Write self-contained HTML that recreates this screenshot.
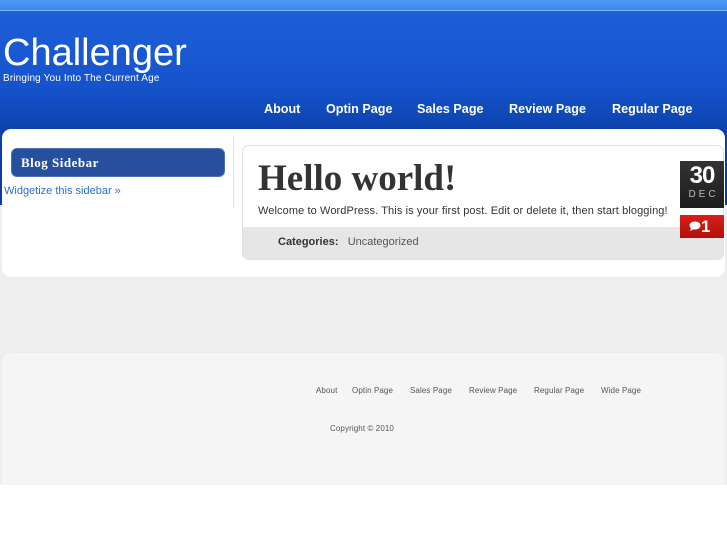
<!DOCTYPE html>
<html><head><style>
*{margin:0;padding:0;box-sizing:border-box}
body{width:727px;height:545px;background:#fff;font-family:"Liberation Sans",sans-serif;position:relative;overflow:hidden}
.top{position:absolute;left:0;top:0;width:727px;height:11px;background:linear-gradient(#4f9af7,#3a86ee);border-bottom:1px solid #7fb4f5}
.hdr{position:absolute;left:0;top:11px;width:727px;height:194px;background:linear-gradient(180deg,#1d5fd8 0%,#1553cb 40%,#0a3fa6 66%,#0a3a9c 100%)}
.gray{position:absolute;left:0;top:205px;width:727px;height:280px;background:#eeeeee}
.title{position:absolute;left:3px;top:32px;color:#fff;font-size:38px}
.tag{position:absolute;left:3px;top:73px;color:#fff;font-size:10px;letter-spacing:.15px}
.nav{position:absolute;top:102px;color:#fff;font-weight:bold;font-size:12.6px}
.main{position:absolute;left:2px;top:129px;width:723px;height:148px;background:#fff;border-radius:9px}
.sbh{position:absolute;left:11px;top:148px;width:214px;height:29px;background:#26509e;border:1px solid #4a70b8;border-radius:6px;color:#fff;font-family:"Liberation Serif",serif;font-weight:bold;font-size:13px;padding:6px 9px;letter-spacing:.5px}
.wid{position:absolute;left:4px;top:185px;color:#2a6fd0;font-size:11px}
.vl{position:absolute;left:233px;top:136px;width:1px;height:72px;background:#e2e2e2}
.post{position:absolute;left:242px;top:145px;width:482px;height:115px;background:#fff;border:1px solid #e0e0e0;border-radius:7px;overflow:hidden}
.pf{position:absolute;left:0;top:81px;width:100%;height:34px;background:#e6e6e6}
.h1{position:absolute;left:258px;top:157px;font-family:"Liberation Serif",serif;font-weight:bold;font-size:37px;color:#333}
.txt{position:absolute;left:258px;top:205px;font-size:11px;color:#333;letter-spacing:.1px}
.cat{position:absolute;left:278px;top:236px;font-size:11px;color:#555}
.date{position:absolute;left:680px;top:161px;width:44px;height:47px;background:linear-gradient(#333,#1d1d1d);color:#fff;text-align:center}
.date b{display:block;font-size:24px;line-height:26px;padding-top:2px;letter-spacing:-1px}
.date span{display:block;font-size:10px;letter-spacing:3px;color:#bbb;padding-left:3px}
.cm{position:absolute;left:680px;top:215px;width:44px;height:23px;background:linear-gradient(#d8201c,#b30f0c);color:#fff;font-weight:bold;font-size:17px;line-height:23px;padding-left:9px}
.foot{position:absolute;left:2px;top:353px;width:723px;height:132px;background:#f5f5f5;border-radius:9px 9px 0 0}
.fl{position:absolute;top:386px;font-size:8px;color:#555;letter-spacing:.1px}
</style></head><body>
<div class="top"></div><div class="hdr"></div><div class="gray"></div>
<div class="title">Challenger</div>
<div class="tag">Bringing You Into The Current Age</div>
<div class="nav" style="left:264px">About</div>
<div class="nav" style="left:326px">Optin Page</div>
<div class="nav" style="left:417px">Sales Page</div>
<div class="nav" style="left:509px">Review Page</div>
<div class="nav" style="left:612px">Regular Page</div>
<div class="main"></div>
<div class="sbh">Blog Sidebar</div>
<div class="wid">Widgetize this sidebar »</div>
<div class="vl"></div>
<div class="post"><div class="pf"></div></div>
<div class="h1">Hello world!</div>
<div class="txt">Welcome to WordPress. This is your first post. Edit or delete it, then start blogging!</div>
<div class="cat"><b style="color:#333">Categories:</b>&nbsp;&nbsp; Uncategorized</div>
<div class="date"><b>30</b><span>DEC</span></div>
<div class="cm"><svg width="12" height="10" viewBox="0 0 12 10" style="vertical-align:1px"><ellipse cx="6" cy="4.5" rx="5.5" ry="4" fill="#fff"/><path d="M2 7 L1 10 L5 8Z" fill="#fff"/></svg>1</div>
<div class="foot"></div>
<div class="fl" style="left:316px">About</div>
<div class="fl" style="left:352px">Optin Page</div>
<div class="fl" style="left:410px">Sales Page</div>
<div class="fl" style="left:469px">Review Page</div>
<div class="fl" style="left:534px">Regular Page</div>
<div class="fl" style="left:601px">Wide Page</div>
<div class="fl" style="left:330px;top:424px">Copyright © 2010</div>
</body></html>
